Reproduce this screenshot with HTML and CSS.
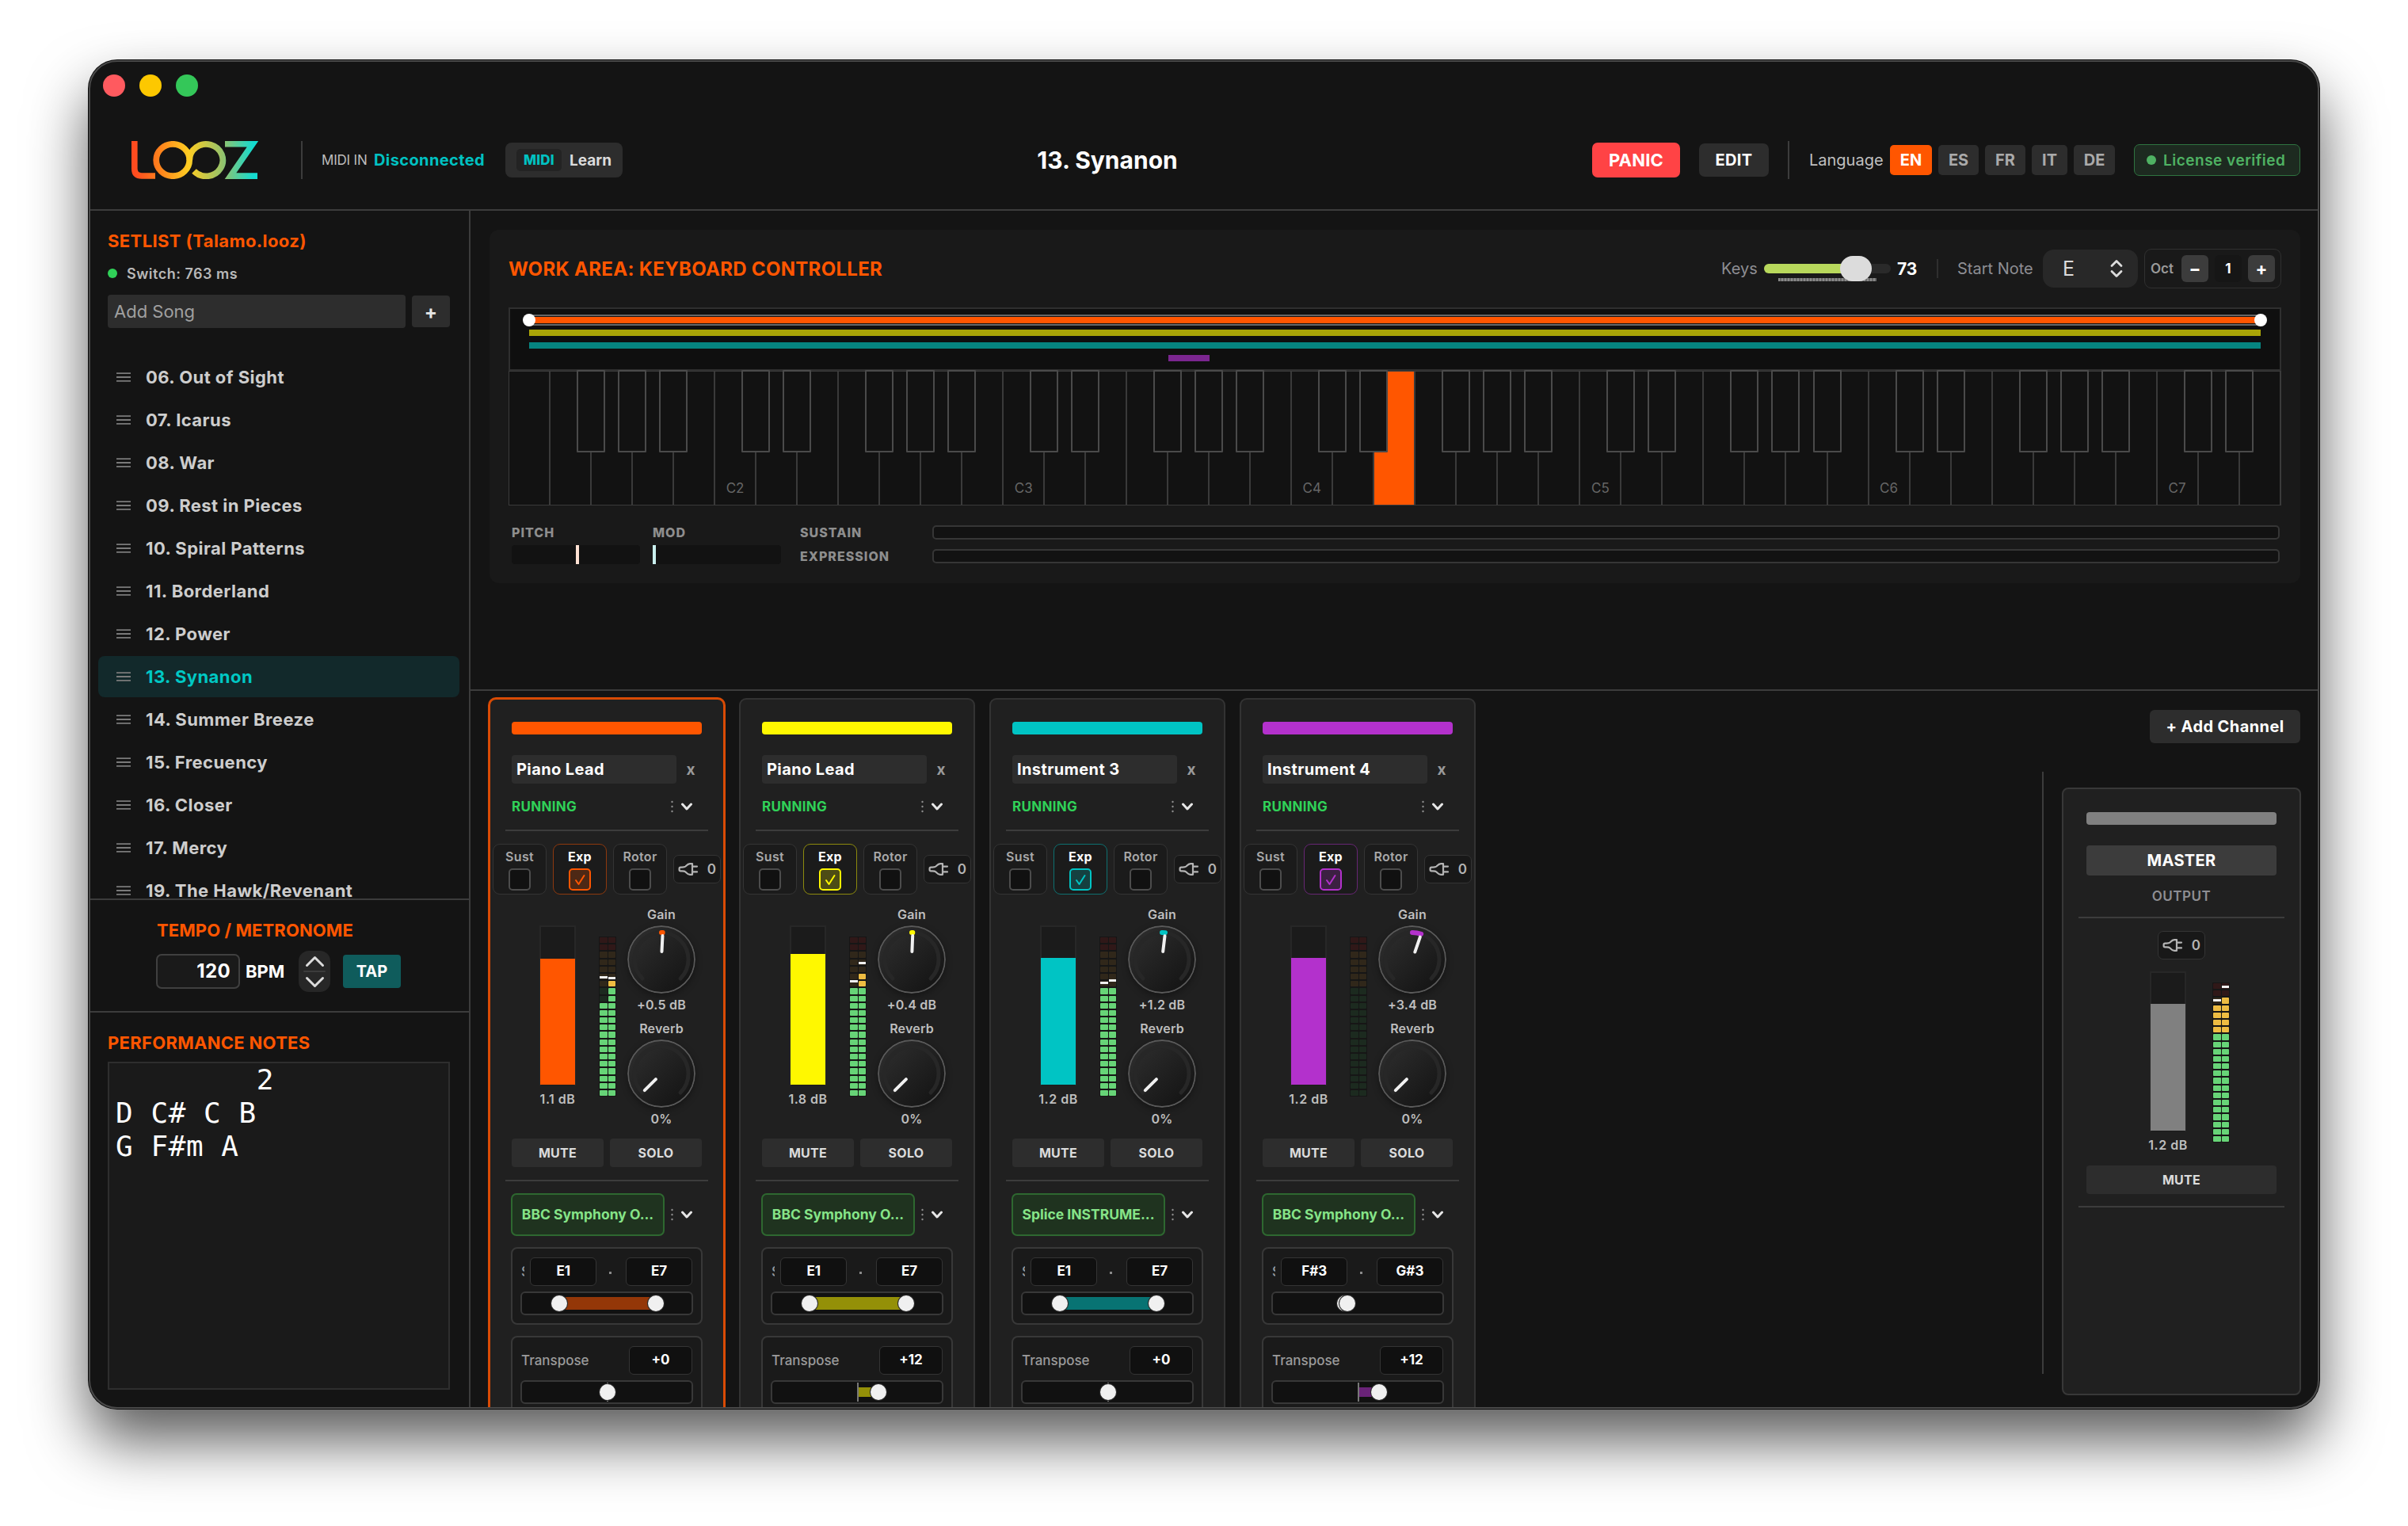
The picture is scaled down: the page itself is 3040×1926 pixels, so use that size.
FILE: index.html
```html
<!DOCTYPE html>
<html lang="en">
<head>
    <meta charset="UTF-8">
    <meta name="viewport" content="width=device-width, initial-scale=1.0">
    <title>LOOZ - 13. Synanon</title>
    <link rel="stylesheet" href="styles.css">
</head>
<body>
    <div class="window">
        <div class="titlebar">
            <span class="light red"></span>
            <span class="light yellow"></span>
            <span class="light green"></span>
        </div>

        <header class="header">
            <div class="header-left">
                <svg class="logo" width="160" height="48" viewBox="0 0 160 48" fill="none" stroke="url(#logoGradient)">
                    <defs>
                        <linearGradient id="logoGradient" gradientUnits="userSpaceOnUse" x1="0" y1="0" x2="160" y2="0">
                            <stop offset="0.03" stop-color="#ff4b1f"/>
                            <stop offset="0.25" stop-color="#ff8a1c"/>
                            <stop offset="0.45" stop-color="#fecd22"/>
                            <stop offset="0.72" stop-color="#93c26c"/>
                            <stop offset="0.96" stop-color="#14dbd0"/>
                        </linearGradient>
                    </defs>
                    <path stroke-width="7.6" d="M3.8 0V35Q3.8 44 13 44H30"/>
                    <ellipse stroke-width="7.7" cx="52.2" cy="24" rx="21" ry="20.2"/>
                    <path stroke-width="7.7" d="M73.3 24A21 20.2 0 1 1 79 38"/>
                    <path stroke-width="7.6" d="M118 3.6H153L125 44.1H159"/>
                </svg>
                <span class="v-line"></span>
                <span class="midi-in">MIDI IN</span>
                <span class="midi-status">Disconnected</span>
                <button class="learn-btn"><span class="midi-chip">MIDI</span><span class="learn-text">Learn</span></button>
            </div>
            <h1 class="song-title">13. Synanon</h1>
            <div class="header-right">
                <button class="panic-btn">PANIC</button>
                <button class="edit-btn">EDIT</button>
                <span class="v-line"></span>
                <span class="lang-label">Language</span>
                <div class="lang-list">
                    <button class="lang w-en active">EN</button>
                    <button class="lang w-es">ES</button>
                    <button class="lang w-fr">FR</button>
                    <button class="lang w-it">IT</button>
                    <button class="lang w-de">DE</button>
                </div>
                <div class="license"><span class="license-dot"></span>License verified</div>
            </div>
        </header>

        <div class="content">
            <aside class="sidebar">
                <section class="setlist">
                    <h2 class="section-title">SETLIST (Talamo.looz)</h2>
                    <div class="switch-info"><span class="switch-dot"></span>Switch: 763 ms</div>
                    <div class="add-song">
                        <div class="add-input">Add Song</div>
                        <button class="add-btn">+</button>
                    </div>
                    <ul class="songs" id="songs"></ul>
                </section>

                <section class="tempo">
                    <h2 class="section-title">TEMPO / METRONOME</h2>
                    <div class="tempo-row">
                        <div class="bpm-input">120</div>
                        <span class="bpm-label">BPM</span>
                        <div class="stepper">
                            <svg width="40" height="52" viewBox="0 0 40 52" fill="none" stroke="#dcdcdc" stroke-width="3" stroke-linecap="round" stroke-linejoin="round">
                                <path d="M10.5 18.5L20.5 8.5L30.5 18.5"/>
                                <path d="M10.5 34.5L20.5 44.5L30.5 34.5"/>
                                <path stroke="#3c3c3c" stroke-width="2" d="M7 26H33"/>
                            </svg>
                        </div>
                        <button class="tap-btn">TAP</button>
                    </div>
                </section>

                <section class="notes">
                    <h2 class="section-title">PERFORMANCE NOTES</h2>
                    <pre class="notes-text">        2
D C# C B
G F#m A</pre>
                </section>
            </aside>

            <main class="main">
                <section class="work">
                    <div class="work-panel">
                        <div class="work-header">
                            <h2 class="work-title">WORK AREA: KEYBOARD CONTROLLER</h2>
                            <div class="work-tools">
                                <span class="tool-label keys-label">Keys</span>
                                <div class="keys-slider">
                                    <div class="keys-fill"></div>
                                    <div class="keys-ticks"></div>
                                    <div class="keys-thumb"></div>
                                </div>
                                <span class="keys-value">73</span>
                                <span class="tool-line"></span>
                                <span class="tool-label start-label">Start Note</span>
                                <div class="note-select">
                                    <span>E</span>
                                    <svg width="20" height="26" viewBox="0 0 20 26" fill="none" stroke="#dcdcdc" stroke-width="2.8" stroke-linecap="round" stroke-linejoin="round">
                                        <path d="M4 9.5L10 3.5L16 9.5M4 16.5L10 22.5L16 16.5"/>
                                    </svg>
                                </div>
                                <div class="octave">
                                    <span class="oct-label">Oct</span>
                                    <button class="oct-btn">−</button>
                                    <span class="oct-value">1</span>
                                    <button class="oct-btn">+</button>
                                </div>
                            </div>
                        </div>

                        <div class="ranges">
                            <div class="range-bar range-orange"></div>
                            <div class="range-bar range-yellow"></div>
                            <div class="range-bar range-teal"></div>
                            <div class="range-bar range-purple"></div>
                        </div>
                        <div class="keyboard" id="keyboard"></div>

                        <div class="controllers">
                            <div class="wheel">
                                <span class="ctrl-label">PITCH</span>
                                <div class="wheel-bar"><span class="wheel-mark pitch-mark"></span></div>
                            </div>
                            <div class="wheel">
                                <span class="ctrl-label">MOD</span>
                                <div class="wheel-bar"><span class="wheel-mark mod-mark"></span></div>
                            </div>
                            <div class="pedals">
                                <div class="pedal"><span class="ctrl-label">SUSTAIN</span><div class="pedal-bar"></div></div>
                                <div class="pedal"><span class="ctrl-label">EXPRESSION</span><div class="pedal-bar"></div></div>
                            </div>
                        </div>
                    </div>
                </section>

                <section class="mixer">
                    <div class="channels" id="channels"></div>
                    <div class="master-side">
                        <button class="add-channel">+ Add Channel</button>
                        <div class="master-area">
                            <div class="master-line"></div>
                            <div class="master" id="master"></div>
                        </div>
                    </div>
                </section>
            </main>
        </div>
    </div>

    <script src="script.js"></script>
</body>
</html>
```
FILE: styles.css
```css
* {
    margin: 0;
    padding: 0;
    box-sizing: border-box;
}

body {
    font-family: Inter, 'Liberation Sans', sans-serif;
    background-color: #fff;
    color: #fff;
    padding: 76px 112px 0;
    height: 1926px;
    overflow: hidden;
}

button {
    font-family: inherit;
    border: none;
    color: #fff;
    white-space: nowrap;
}

span, h1, h2, button, div {
    white-space: nowrap;
}

.window {
    width: 2816px;
    height: 1702px;
    border: 2px solid #4a4a4a;
    border-radius: 36px;
    background-color: #141414;
    box-shadow: 0 0 0 1px #0a0a0a, 0 40px 76px rgba(0, 0, 0, 0.65);
    overflow: hidden;
    display: flex;
    flex-direction: column;
}

.titlebar {
    height: 62px;
    padding: 16px 0 0 16px;
    display: flex;
    gap: 18px;
}

.light {
    width: 28px;
    height: 28px;
    border-radius: 50%;
}

.light.red { background-color: #ff5a5f; }
.light.yellow { background-color: #fdc800; }
.light.green { background-color: #34c759; }

/* Header */
.header {
    height: 126px;
    border-bottom: 2px solid #3c3c3c;
    display: grid;
    grid-template-columns: 1141px 286px 1fr;
    align-items: center;
}

.header-left,
.header-right {
    display: flex;
    align-items: center;
}

.header-left {
    padding-left: 52px;
}

.v-line {
    width: 2px;
    height: 48px;
    background-color: #3c3c3c;
}

.header-left .v-line {
    margin-left: 54px;
}

.midi-in {
    margin-left: 24px;
    width: 66px;
    font-size: 17px;
    letter-spacing: -0.2px;
    color: #bdbdbd;
}

.midi-status {
    font-size: 20px;
    font-weight: 700;
    letter-spacing: 0.4px;
    color: #00c2c2;
    width: 166px;
}

.learn-btn {
    width: 148px;
    height: 44px;
    padding-left: 14px;
    border-radius: 8px;
    background-color: #2d2d2d;
    display: flex;
    align-items: center;
    gap: 10px;
}

.midi-chip {
    width: 57px;
    height: 28px;
    line-height: 28px;
    border-radius: 5px;
    background-color: #232323;
    color: #00c2c2;
    font-size: 17px;
    font-weight: 800;
    letter-spacing: 0.2px;
    text-align: center;
}

.learn-text {
    font-size: 19px;
    font-weight: 700;
    color: #dcdcdc;
}

.song-title {
    font-size: 30px;
    font-weight: 700;
    text-align: center;
}

.header-right {
    justify-content: flex-end;
    padding-right: 22px;
}

.panic-btn {
    width: 111px;
    height: 44px;
    border-radius: 7px;
    background-color: #ff4345;
    font-size: 22px;
    font-weight: 700;
    letter-spacing: 0.2px;
}

.edit-btn {
    width: 88px;
    height: 42px;
    margin-left: 24px;
    border-radius: 7px;
    background-color: #2d2d2d;
    font-size: 20px;
    font-weight: 700;
    letter-spacing: 0.3px;
}

.header-right .v-line {
    margin-left: 24px;
}

.lang-label {
    margin-left: 25px;
    width: 102px;
    font-size: 20px;
    color: #c0c0c0;
}

.lang-list {
    display: flex;
    gap: 8px;
}

.lang {
    height: 38px;
    border-radius: 5px;
    background-color: #2d2d2d;
    color: #aaa;
    font-size: 20px;
    font-weight: 700;
}

.w-en { width: 53px; }
.w-es { width: 51px; }
.w-fr { width: 51px; }
.w-it { width: 45px; }
.w-de { width: 52px; }

.lang.active {
    background-color: #ff5600;
    color: #fff;
}

.license {
    margin-left: 24px;
    width: 210px;
    height: 40px;
    padding-left: 15px;
    border: 1.5px solid #2f7440;
    border-radius: 7px;
    background-color: #1d2a20;
    color: #4fb263;
    font-size: 19px;
    font-weight: 600;
    letter-spacing: 0.5px;
    display: flex;
    align-items: center;
    gap: 9px;
}

.license-dot {
    width: 12px;
    height: 12px;
    border-radius: 50%;
    background-color: #4fb263;
}

.content {
    flex: 1;
    min-height: 0;
    display: flex;
}

/* Sidebar */
.sidebar {
    width: 480px;
    border-right: 2px solid #3c3c3c;
    display: flex;
    flex-direction: column;
}

.section-title {
    font-size: 22px;
    line-height: 28px;
    font-weight: 700;
    letter-spacing: 0.3px;
    color: #ff5600;
}

.tempo .section-title {
    letter-spacing: 0.1px;
}

.setlist {
    height: 868px;
    padding: 24px 24px 0 22px;
    overflow: hidden;
}

.setlist .section-title {
    letter-spacing: 0.4px;
}

.switch-info {
    margin-top: 15px;
    height: 24px;
    font-size: 18px;
    font-weight: 600;
    letter-spacing: 0.5px;
    color: #b8b8b8;
    display: flex;
    align-items: center;
    gap: 12px;
}

.switch-dot {
    width: 12px;
    height: 12px;
    border-radius: 50%;
    background-color: #30d158;
}

.add-song {
    margin-top: 15px;
    display: flex;
    align-items: center;
    gap: 8px;
}

.add-input {
    width: 376px;
    height: 42px;
    line-height: 42px;
    padding-left: 8px;
    border-radius: 4px;
    background-color: #2d2d2d;
    color: #a0a0a0;
    font-size: 22px;
}

.add-btn {
    width: 48px;
    height: 40px;
    border-radius: 4px;
    background-color: #2d2d2d;
    font-size: 24px;
    font-weight: 700;
    color: #e6e6e6;
}

.songs {
    list-style: none;
    margin: 36px -12px 0;
    display: flex;
    flex-direction: column;
    gap: 2px;
}

.song {
    height: 52px;
    padding-left: 23px;
    border-radius: 8px;
    font-size: 22px;
    font-weight: 700;
    letter-spacing: 0.45px;
    color: #cdcdcd;
    display: flex;
    align-items: center;
    gap: 19px;
}

.song.active {
    background-color: #12292b;
    color: #00c8c4;
}

.tempo {
    height: 142px;
    border-top: 2px solid #3c3c3c;
    padding: 24px 0 0 84px;
}

.tempo-row {
    margin: 12px 0 0 -1px;
    display: flex;
    align-items: center;
}

.bpm-input {
    width: 106px;
    height: 44px;
    line-height: 40px;
    padding-right: 10px;
    border: 2px solid #404040;
    border-radius: 7px;
    background-color: #1a1a1a;
    font-size: 24px;
    font-weight: 700;
    letter-spacing: 0.4px;
    text-align: right;
}

.bpm-label {
    margin-left: 7px;
    width: 67px;
    font-size: 22px;
    font-weight: 700;
}

.stepper {
    width: 40px;
    height: 52px;
    border-radius: 13px;
    background-color: #272727;
}

.tap-btn {
    margin-left: 16px;
    width: 73px;
    height: 42px;
    border-radius: 4px;
    background-color: #0f5c5c;
    font-size: 20px;
    font-weight: 700;
}

.notes {
    flex: 1;
    border-top: 2px solid #3c3c3c;
    padding: 24px 24px 22px 22px;
    display: flex;
    flex-direction: column;
    gap: 12px;
}

.notes-text {
    height: 412px;
    padding: 0 8px;
    border: 2px solid #2e2e2e;
    background-color: #1a1a1a;
    font-family: 'DejaVu Sans Mono', monospace;
    font-size: 36px;
    line-height: 42px;
    letter-spacing: 0.55px;
    text-indent: 0;
    margin-top: -2px;
    border-top-width: 0;
    box-shadow: 0 -2px 0 #2e2e2e;
    position: relative;
    top: 2px;
}

/* Work area */
.main {
    flex: 1;
    min-width: 0;
    display: flex;
    flex-direction: column;
}

.work {
    height: 604px;
    padding: 24px 22px 0 24px;
}

.work-panel {
    height: 446px;
    padding: 24px;
    border-radius: 12px;
    background-color: #191919;
}

.work-header {
    height: 50px;
    display: flex;
    align-items: center;
    justify-content: space-between;
}

.work-title {
    font-size: 24px;
    font-weight: 700;
    letter-spacing: 0.3px;
    color: #ff5600;
}

.work-tools {
    display: flex;
    align-items: center;
}

.tool-label {
    font-size: 20px;
    color: #8e8e93;
}

.keys-label {
    width: 54px;
}

.start-label {
    margin-left: 24px;
    width: 108px;
}

.keys-slider {
    position: relative;
    width: 160px;
    height: 12px;
    border-radius: 6px;
    background-color: #2a2a2a;
}

.keys-fill {
    width: 112px;
    height: 12px;
    border-radius: 6px;
    background-color: #b8d85c;
}

.keys-ticks {
    position: absolute;
    left: 18px;
    top: 18px;
    width: 124px;
    height: 4px;
    background: repeating-linear-gradient(90deg, #8a8a8a 0 2px, #686868 2px 4px);
}

.keys-thumb {
    position: absolute;
    left: 96px;
    top: -10px;
    width: 40px;
    height: 32px;
    border-radius: 16px;
    background-color: #dcdcdc;
}

.keys-value {
    margin-left: 8px;
    width: 50px;
    font-size: 21px;
    font-weight: 700;
}

.tool-line {
    width: 2px;
    height: 24px;
    background-color: #2f2f2f;
}

.note-select {
    width: 120px;
    height: 48px;
    padding: 0 17px 0 25px;
    border-radius: 14px;
    background-color: #282828;
    color: #dcdcdc;
    font-size: 25px;
    display: flex;
    align-items: center;
    justify-content: space-between;
}

.octave {
    margin-left: 8px;
    width: 173px;
    height: 50px;
    padding: 0 7px;
    border: 1.5px solid #303030;
    border-radius: 9px;
    display: flex;
    align-items: center;
    gap: 8px;
}

.oct-label {
    width: 31px;
    font-size: 17px;
    font-weight: 600;
    color: #9a9a9a;
}

.oct-btn,
.oct-value {
    width: 34px;
    height: 34px;
    line-height: 34px;
    border-radius: 6px;
    text-align: center;
    font-size: 17px;
    font-weight: 700;
}

.oct-btn {
    background-color: #3c3c3c;
    font-size: 22px;
}

.oct-value {
    background-color: #161616;
}

.ranges {
    margin-top: 24px;
    height: 80px;
    padding: 10px 24px 0;
    border: 2px solid #2f2f2f;
    background-color: #0f0f0f;
    display: flex;
    flex-direction: column;
    gap: 8px;
}

.range-bar {
    height: 8px;
    flex: none;
}

.range-orange {
    position: relative;
    background-color: #ff5600;
    box-shadow: 0 0 0 1px #141414, 0 0 0 3px #666;
}

.range-orange::before,
.range-orange::after {
    content: "";
    position: absolute;
    top: -4px;
    left: -8px;
    width: 16px;
    height: 16px;
    border-radius: 50%;
    background-color: #fff;
}

.range-orange::after {
    left: auto;
    right: -8px;
}

.range-yellow { background-color: #aaa507; }
.range-teal { background-color: #068480; }

.range-purple {
    margin-left: 807px;
    width: 52px;
    background-color: #7b2690;
}

.keyboard {
    position: relative;
    height: 170px;
    display: flex;
    border-left: 1px solid #3c3c3c;
    border-top: 1px solid #3c3c3c;
}

.white-key {
    flex: 1;
    border-right: 2px solid #3a3a3a;
    border-bottom: 1.5px solid #3a3a3a;
    background-color: #121212;
    color: #666;
    font-size: 17px;
    display: flex;
    align-items: flex-end;
    justify-content: center;
    padding-bottom: 11px;
    position: relative;
}

.white-key.pressed {
    background-color: #ff5600;
}

/* black keys straddle the left edge of their white key */
.black-key {
    position: absolute;
    left: -19px;
    top: -2px;
    width: 36px;
    height: 104px;
    border: 2px solid #4a4a4a;
    border-radius: 1px;
    background-color: #121212;
    z-index: 1;
}

.controllers {
    margin-top: 24px;
    padding-left: 4px;
    display: flex;
}

.ctrl-label {
    font-size: 16px;
    line-height: 20px;
    font-weight: 800;
    letter-spacing: 1px;
    color: #8e8e8e;
}

.wheel {
    width: 162px;
    margin-right: 16px;
    display: flex;
    flex-direction: column;
    gap: 6px;
}

.wheel-bar {
    height: 24px;
    border-radius: 4px;
    background-color: #121212;
    display: flex;
}

.wheel-mark {
    width: 4px;
    height: 24px;
}

.pitch-mark {
    margin-left: 81px;
    background-color: #ffe1d3;
}

.mod-mark {
    background-color: #c9efee;
}

.pedals {
    flex: 1;
    padding: 0 2px 0 8px;
    display: flex;
    flex-direction: column;
    gap: 10px;
}

.pedal {
    display: flex;
    align-items: center;
}

.pedal .ctrl-label {
    width: 167px;
}

.pedal-bar {
    flex: 1;
    height: 18px;
    border: 2px solid #363636;
    border-radius: 5px;
    background-color: #121212;
}

/* Mixer */
.mixer {
    flex: 1;
    min-height: 0;
    border-top: 2px solid #3c3c3c;
    display: flex;
    overflow: hidden;
}

.channels {
    flex: 1;
    padding: 9px 0 0 23px;
    display: flex;
    gap: 18px;
}

.channel {
    flex: none;
    width: 298px;
    height: 960px;
    padding: 28px 27px 0;
    border: 2px solid #333;
    border-radius: 9px;
    background-color: #202020;
}

.channel.selected {
    border-color: #d94b05;
    box-shadow: 0 0 0 1px #d94b05;
}

.color-bar {
    height: 16px;
    border-radius: 4px;
    background-color: var(--c);
}

.name-row {
    margin-top: 26px;
    display: flex;
    align-items: center;
}

.name-input {
    flex: none;
    width: 208px;
    height: 36px;
    line-height: 36px;
    padding-left: 6px;
    border-radius: 4px;
    background-color: #2d2d2d;
    font-size: 20px;
    font-weight: 700;
    letter-spacing: 0.4px;
}

.close {
    flex: none;
    width: 36px;
    text-align: center;
    font-size: 19px;
    font-weight: 700;
    color: #9a9a9a;
}

.status-row {
    margin-top: 17px;
    height: 24px;
    display: flex;
    align-items: center;
    justify-content: space-between;
    padding-right: 12px;
}

.running {
    font-size: 17px;
    font-weight: 700;
    letter-spacing: 0.3px;
    color: #30d158;
}

.divider {
    height: 2px;
    margin: 17px -8px 0;
    background-color: #3c3c3c;
}

.toggles {
    margin: 16px -24px 0;
    display: flex;
    align-items: center;
    gap: 8px;
}

.toggle {
    width: 68px;
    height: 64px;
    padding-top: 5px;
    border: 1.5px solid #343434;
    border-radius: 9px;
    background-color: #1b1b1b;
    display: flex;
    flex-direction: column;
    align-items: center;
    gap: 4px;
    font-size: 16px;
    line-height: 21px;
    font-weight: 600;
    letter-spacing: 0.3px;
    color: #a8a8a8;
}

.toggle.on {
    color: #fff;
    font-weight: 700;
    border-color: color-mix(in srgb, var(--c) 50%, #1b1b1b);
}

.check {
    width: 28px;
    height: 28px;
    border: 2px solid #4c4c4c;
    border-radius: 5px;
    background-color: #111;
    display: flex;
}

.toggle.on .check {
    border-color: var(--c);
    background-color: color-mix(in srgb, var(--c) 22%, #1b1b1b);
}

.midi-box {
    width: 60px;
    height: 36px;
    border: 1.5px solid #343434;
    border-radius: 7px;
    background-color: #181818;
    display: flex;
    align-items: center;
    justify-content: space-between;
    padding: 0 5px;
    font-size: 17px;
    font-weight: 600;
    color: #b4b4b4;
}

.strip {
    height: 308px;
    padding: 15px 0 0 35px;
    display: flex;
}

.fader-col {
    width: 46px;
    margin-top: 24px;
    display: flex;
    flex-direction: column;
    align-items: center;
}

.fader {
    width: 46px;
    height: 202px;
    padding-bottom: 1px;
    border: 2px solid #272727;
    border-bottom: none;
    background-color: #1b1b1b;
    display: flex;
    align-items: flex-end;
}

.fader-fill {
    flex: 1;
    margin: 0 -1px;
    background-color: var(--c);
}

.small-text {
    font-size: 16px;
    line-height: 20px;
    font-weight: 600;
    letter-spacing: 0.2px;
    color: #bebebe;
}

.fader-col .small-text {
    margin-top: 7px;
    letter-spacing: 0.5px;
}

.meter {
    position: relative;
    flex: none;
    width: 22px;
    height: 202px;
    margin: 38px 14px 0 29px;
    padding: 1px;
    background-color: #161616;
    display: flex;
    gap: 1px;
}

.meter-col {
    position: relative;
    flex: 1;
    display: flex;
    flex-direction: column;
    gap: 2px;
}

.seg {
    flex: 1;
    border-radius: 1px;
    background-color: #1c2a1f;
}

.seg.amber { background-color: #30271a; }
.seg.red { background-color: #301818; }
.seg.lit { background-color: #67d477; }
.seg.amber.lit { background-color: #eebc42; }

.peak {
    position: absolute;
    left: 0;
    right: 0;
    height: 3px;
    background-color: #f0f0f0;
}

.knobs {
    width: 86px;
    display: flex;
    flex-direction: column;
    align-items: center;
}

.knob {
    margin: 4px 0;
    width: 86px;
    height: 86px;
    border-radius: 50%;
    box-shadow: 0 3px 8px rgba(0, 0, 0, 0.35);
}

.knobs .reverb-label {
    margin-top: 10px;
}

.btn-row {
    display: flex;
    gap: 8px;
}

.mute-btn {
    flex: 1;
    height: 36px;
    border-radius: 4px;
    background-color: #2d2d2d;
    color: #dcdcdc;
    font-size: 16px;
    font-weight: 700;
    letter-spacing: 0.3px;
}

.btn-row + .divider {
    margin-top: 16px;
}

.plugin-row {
    margin: 15px 12px 0 -1px;
    display: flex;
    align-items: center;
    justify-content: space-between;
}

.plugin {
    width: 194px;
    height: 54px;
    line-height: 50px;
    border: 2px solid #2e6830;
    border-radius: 7px;
    background-color: #1f331f;
    color: #86e488;
    font-size: 17.5px;
    font-weight: 700;
    text-align: center;
}

.param-box {
    height: 98px;
    margin: 14px -1px 0;
    padding: 11px 10px 0;
    border: 2px solid #383838;
    border-radius: 8px;
    background-color: #1a1a1a;
}

.param-row {
    height: 36px;
    padding: 0 1px;
    display: flex;
    align-items: center;
    justify-content: space-between;
}

.param-label {
    font-size: 17px;
    font-weight: 500;
    color: #9a9a9a;
}

.param-label.cut {
    width: 4px;
    overflow: hidden;
}

.param-value {
    width: 84px;
    height: 36px;
    line-height: 33px;
    border: 1.5px solid #343434;
    border-radius: 6px;
    background-color: #101010;
    font-size: 17px;
    font-weight: 700;
    text-align: center;
}

.param-value.narrow {
    width: 80px;
}

.param-dash {
    width: 3px;
    height: 3px;
    margin: 2px 11px 0 8px;
    background-color: #8a8a8a;
}

.param-slider {
    position: relative;
    height: 30px;
    margin-top: 7px;
    border: 2px solid #383838;
    border-radius: 6px;
    background-color: #111;
}

.slider-fill {
    position: absolute;
    top: 5px;
    height: 16px;
    background-color: color-mix(in srgb, var(--c) 55%, #111);
}

.slider-fill.thin {
    top: 7px;
    height: 12px;
}

.slider-center {
    position: absolute;
    left: 107px;
    top: 1px;
    width: 2px;
    height: 24px;
    background-color: #777;
}

.slider-thumb {
    position: absolute;
    top: 3px;
    width: 20px;
    height: 20px;
    margin-left: -10px;
    border-radius: 50%;
    background-color: #f0f0f0;
    box-shadow: 0 0 0 1px #2a2a2a;
}

/* Master */
.master-side {
    width: 348px;
    padding: 24px 21px 0 0;
    display: flex;
    flex-direction: column;
}

.add-channel {
    align-self: flex-end;
    margin-right: 1px;
    width: 190px;
    height: 42px;
    border-radius: 6px;
    background-color: #2d2d2d;
    font-size: 20px;
    font-weight: 700;
    letter-spacing: 0.4px;
}

.master-area {
    margin-top: 36px;
    display: flex;
}

.master-line {
    width: 2px;
    height: 760px;
    background-color: #3c3c3c;
}

.master {
    margin: 20px 0 0 23px;
    width: 302px;
    height: 767px;
    padding: 29px 29px 0;
    border: 2px solid #383838;
    border-radius: 8px;
    background-color: #202020;
    display: flex;
    flex-direction: column;
}

.master-name {
    margin-top: 26px;
    height: 38px;
    line-height: 38px;
    border-radius: 4px;
    background-color: #3c3c3c;
    font-size: 20px;
    font-weight: 700;
    letter-spacing: 0.3px;
    text-align: center;
}

.master-output {
    margin-top: 15px;
    height: 22px;
    line-height: 22px;
    font-size: 17px;
    font-weight: 600;
    letter-spacing: 0.5px;
    color: #8e8e93;
    text-align: center;
}

.master .divider {
    margin: 15px -10px 0;
}

.master .midi-box {
    align-self: center;
    margin-top: 16px;
}

.master .strip {
    height: 260px;
    padding: 15px 0 0 80px;
}

.master .fader-col {
    margin-top: 0;
}

.master .meter {
    margin: 14px 0 0 33px;
}

.master .mute-btn {
    flex: none;
}
```
FILE: script.js
```js
const songs = [
    '06. Out of Sight', '07. Icarus', '08. War', '09. Rest in Pieces',
    '10. Spiral Patterns', '11. Borderland', '12. Power', '13. Synanon',
    '14. Summer Breeze', '15. Frecuency', '16. Closer', '17. Mercy',
    '19. The Hawk/Revenant'
];

// lit = first lit meter row (left, right), peaks in px from the top of the meter
const channels = [
    { name: 'Piano Lead', color: '#ff5600', gain: 0.5, level: 1.1, fill: 159, lit: [9, 6], peaks: [49, 50],
      plugin: 'BBC Symphony O...', low: 'E1', high: 'E7', range: [47, 169], transpose: 0, selected: true },
    { name: 'Piano Lead', color: '#fff800', gain: 0.4, level: 1.8, fill: 165, lit: [7, 5], peaks: [54, 31],
      plugin: 'BBC Symphony O...', low: 'E1', high: 'E7', range: [47, 169], transpose: 12 },
    { name: 'Instrument 3', color: '#00c4c4', gain: 1.2, level: 1.2, fill: 160, lit: [7, 7], peaks: [56, 53],
      plugin: 'Splice INSTRUME...', low: 'E1', high: 'E7', range: [47, 169], transpose: 0 },
    { name: 'Instrument 4', color: '#b331cc', gain: 3.4, level: 1.2, fill: 160, lit: [22, 22], peaks: [],
      plugin: 'BBC Symphony O...', low: 'F#3', high: 'G#3', range: [91, 94], transpose: 12 }
];

const chevron = `
    <svg width="28" height="22" viewBox="0 0 28 22">
        <g fill="#8e8e8e"><circle cx="2.5" cy="5" r="1.2"/><circle cx="2.5" cy="11" r="1.2"/><circle cx="2.5" cy="17" r="1.2"/></g>
        <path d="M15.5 8L21 14L26.5 8" fill="none" stroke="#e6e6e6" stroke-width="3" stroke-linecap="round" stroke-linejoin="round"/>
    </svg>`;

const midiBox = `
    <div class="midi-box">
        <svg width="26" height="18" viewBox="0 0 26 18" fill="none" stroke="#b4b4b4" stroke-width="2.2" stroke-linejoin="round" stroke-linecap="round">
            <path d="M18 2.2V15.8H15C12.5 15.8 11 14 9.5 12.5C8.5 11.6 7 11.4 5 11.4H3.2Q1.6 11.4 1.6 9.8V8.2Q1.6 6.6 3.2 6.6H5C7 6.6 8.5 6.4 9.5 5.5C11 4 12.5 2.2 15 2.2Z"/>
            <path d="M18 5.6H24M18 12.4H24"/>
        </svg>
        <span>0</span>
    </div>`;

const check = `
    <svg width="24" height="24" viewBox="0 0 24 24" fill="none" stroke="currentColor" stroke-width="2" stroke-linecap="round" stroke-linejoin="round">
        <path d="M7 13L10.5 18L17.5 7"/>
    </svg>`;

function polar(angle, r) {
    const a = angle * Math.PI / 180;
    return (43 + r * Math.sin(a)).toFixed(2) + ' ' + (43 - r * Math.cos(a)).toFixed(2);
}

function knob(angle, color) {
    const valueArc = color
        ? `<path d="M${polar(0, 34)}A34 34 0 0 1 ${polar(angle, 34)}" stroke="${color}" stroke-width="6"/>`
        : '';
    return `
        <svg class="knob" viewBox="0 0 86 86" fill="none" stroke-linecap="round">
            <defs>
                <linearGradient id="knobGradient" x1="0" y1="0" x2="1" y2="1">
                    <stop offset="0.1" stop-color="#2d2d2d"/>
                    <stop offset="0.9" stop-color="#141414"/>
                </linearGradient>
            </defs>
            <circle cx="43" cy="43" r="42" fill="url(#knobGradient)" stroke="#5a5a5a" stroke-width="1.8"/>
            <path d="M${polar(-135, 34)}A34 34 0 1 1 ${polar(135, 34)}" stroke="#272727" stroke-width="5"/>
            ${valueArc}
            <path d="M${polar(angle, 10)}L${polar(angle, 30)}" stroke="#f0f0f0" stroke-width="4"/>
        </svg>`;
}

function meter(lit, peaks) {
    let html = '<div class="meter">';
    for (let col = 0; col < 2; col++) {
        html += '<div class="meter-col">';
        for (let row = 0; row < 22; row++) {
            const zone = row < 2 ? 'red' : row < 7 ? 'amber' : '';
            html += `<span class="seg ${zone} ${row >= lit[col] ? 'lit' : ''}"></span>`;
        }
        if (peaks[col] !== undefined) {
            html += `<span class="peak" style="top: ${peaks[col]}px"></span>`;
        }
        html += '</div>';
    }
    return html + '</div>';
}

function fader(fill, level) {
    return `
        <div class="fader-col">
            <div class="fader"><div class="fader-fill" style="height: ${fill}px"></div></div>
            <span class="small-text">${level} dB</span>
        </div>`;
}

function channel(ch) {
    const thumb = 108 + ch.transpose * 26 / 12;
    const [lo, hi] = ch.range;
    return `
        <div class="channel ${ch.selected ? 'selected' : ''}" style="--c: ${ch.color}">
            <div class="color-bar"></div>
            <div class="name-row"><div class="name-input">${ch.name}</div><span class="close">x</span></div>
            <div class="status-row"><span class="running">RUNNING</span>${chevron}</div>
            <div class="divider"></div>
            <div class="toggles">
                <div class="toggle">Sust<span class="check"></span></div>
                <div class="toggle on">Exp<span class="check" style="color: ${ch.color}">${check}</span></div>
                <div class="toggle">Rotor<span class="check"></span></div>
                ${midiBox}
            </div>
            <div class="strip">
                ${fader(ch.fill, ch.level)}
                ${meter(ch.lit, ch.peaks)}
                <div class="knobs">
                    <span class="small-text">Gain</span>
                    ${knob(ch.gain * 5.625, ch.color)}
                    <span class="small-text">+${ch.gain} dB</span>
                    <span class="small-text reverb-label">Reverb</span>
                    ${knob(-135)}
                    <span class="small-text">0%</span>
                </div>
            </div>
            <div class="btn-row">
                <button class="mute-btn">MUTE</button>
                <button class="mute-btn">SOLO</button>
            </div>
            <div class="divider"></div>
            <div class="plugin-row"><div class="plugin">${ch.plugin}</div>${chevron}</div>
            <div class="param-box">
                <div class="param-row">
                    <span class="param-label cut">S</span>
                    <div class="param-value">${ch.low}</div>
                    <span class="param-dash"></span>
                    <div class="param-value">${ch.high}</div>
                </div>
                <div class="param-slider">
                    <div class="slider-fill" style="left: ${lo}px; width: ${hi - lo}px"></div>
                    <div class="slider-thumb" style="left: ${lo}px"></div>
                    <div class="slider-thumb" style="left: ${hi}px"></div>
                </div>
            </div>
            <div class="param-box">
                <div class="param-row">
                    <span class="param-label">Transpose</span>
                    <div class="param-value narrow">+${ch.transpose}</div>
                </div>
                <div class="param-slider">
                    <div class="slider-center"></div>
                    <div class="slider-fill thin" style="left: 109px; width: ${thumb - 108}px"></div>
                    <div class="slider-thumb" style="left: ${thumb}px"></div>
                </div>
            </div>
        </div>`;
}

function renderSongs() {
    document.getElementById('songs').innerHTML = songs.map(song => `
        <li class="song ${song === '13. Synanon' ? 'active' : ''}">
            <svg width="18" height="12" viewBox="0 0 18 12" stroke="#7a7a7a" stroke-width="1.8">
                <path d="M0 1.2H18M0 6H18M0 10.8H18"/>
            </svg>
            <span>${song}</span>
        </li>`).join('');
}

function renderKeyboard() {
    const notes = 'CDEFGAB';
    let html = '';
    // 43 white keys, E1 to E7
    for (let i = 0; i < 43; i++) {
        const note = notes[(i + 2) % 7];
        const octave = Math.floor((i + 2) / 7) + 1;
        const black = i > 0 && note !== 'C' && note !== 'F' ? '<span class="black-key"></span>' : '';
        const label = note === 'C' ? 'C' + octave : '';
        html += `<div class="white-key ${note + octave === 'E4' ? 'pressed' : ''}">${black}${label}</div>`;
    }
    document.getElementById('keyboard').innerHTML = html;
}

function renderMaster() {
    document.getElementById('master').innerHTML = `
        <div class="color-bar"></div>
        <div class="master-name">MASTER</div>
        <div class="master-output">OUTPUT</div>
        <div class="divider"></div>
        ${midiBox}
        <div class="strip">${fader(160, 1.2)}${meter([3, 2], [20, 3])}</div>
        <button class="mute-btn">MUTE</button>
        <div class="divider"></div>`;
    document.getElementById('master').style.setProperty('--c', '#808080');
}

renderSongs();
renderKeyboard();
document.getElementById('channels').innerHTML = channels.map(channel).join('');
renderMaster();
```
